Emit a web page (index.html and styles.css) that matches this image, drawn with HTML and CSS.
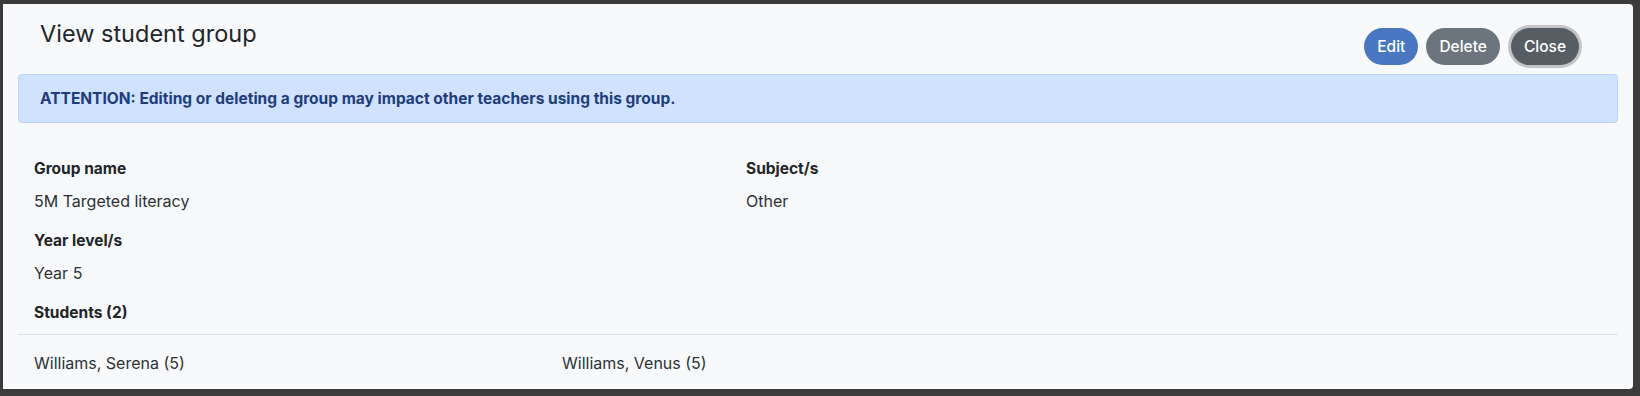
FILE: index.html
```html
<!DOCTYPE html>
<html lang="en">
<head>
    <meta charset="UTF-8">
    <title>View student group</title>
    <link rel="stylesheet" href="styles.css">
</head>
<body>
    <div class="modal">
        <div class="modal-header">
            <h1 class="modal-title">View student group</h1>
            <div class="actions">
                <button class="btn btn-edit">Edit</button>
                <button class="btn btn-delete">Delete</button>
                <button class="btn btn-close">Close</button>
            </div>
        </div>
        <div class="alert">ATTENTION: Editing or deleting a group may impact other teachers using this group.</div>
        <div class="details">
            <div class="field">
                <div class="label">Group name</div>
                <div class="value">5M Targeted literacy</div>
            </div>
            <div class="field">
                <div class="label">Subject/s</div>
                <div class="value">Other</div>
            </div>
            <div class="field">
                <div class="label">Year level/s</div>
                <div class="value">Year 5</div>
            </div>
        </div>
        <div class="students-head label">Students (2)</div>
        <div class="students">
            <div class="value">Williams, Serena (5)</div>
            <div class="value">Williams, Venus (5)</div>
        </div>
    </div>
</body>
</html>
```

FILE: styles.css
```css
body {
    margin: 0;
    background: #3b3b3b;
    font-family: Inter, "Liberation Sans", sans-serif;
    color: #212529;
}
.modal {
    margin: 4px 7px 0 3px;
    height: 385px;
    background: #f8f9fa;
    border-radius: 0 4px 4px 0;
}
.modal-header {
    display: flex;
    justify-content: space-between;
    align-items: flex-start;
    height: 70px;
    padding: 0 51px 0 37px;
}
.modal-title {
    margin: 16px 0 0;
    font-size: 23.5px;
    font-weight: 400;
    line-height: 28px;
}
.actions {
    display: flex;
    gap: 8px;
    margin-top: 24px;
}
.btn {
    height: 37px;
    padding: 0 13px;
    border: none;
    border-radius: 20px;
    color: #fff;
    font-family: inherit;
    font-size: 15.5px;
    font-weight: 500;
}
.btn-edit {
    background: #4a77c1;
}
.btn-delete {
    background: #6c757d;
}
.btn-close {
    margin: 0 3px;
    background: #565e64;
    box-shadow: 0 0 0 3px #c3c5c8;
}
.alert {
    margin: 0 15px;
    padding: 0 21px;
    height: 47px;
    line-height: 47px;
    background: #cfe2ff;
    border: 1px solid #b6d4fe;
    border-radius: 4px;
    color: #1f3d7a;
    font-size: 15.5px;
    font-weight: 700;
}
.details {
    display: grid;
    grid-template-columns: 712px 1fr;
    padding: 36px 31px 0;
}
.label {
    font-size: 15.5px;
    font-weight: 700;
    line-height: 20px;
}
.value {
    font-size: 16px;
    line-height: 20px;
    color: #2d3135;
}
.field .value {
    margin-top: 12px;
}
.field {
    margin-bottom: 20px;
}
.students-head {
    padding: 0 31px;
}
.students {
    display: grid;
    grid-template-columns: 528px 1fr;
    margin: 11px 15px 0;
    padding: 18px 16px 0;
    border-top: 1px solid #dcdee0;
}
```
